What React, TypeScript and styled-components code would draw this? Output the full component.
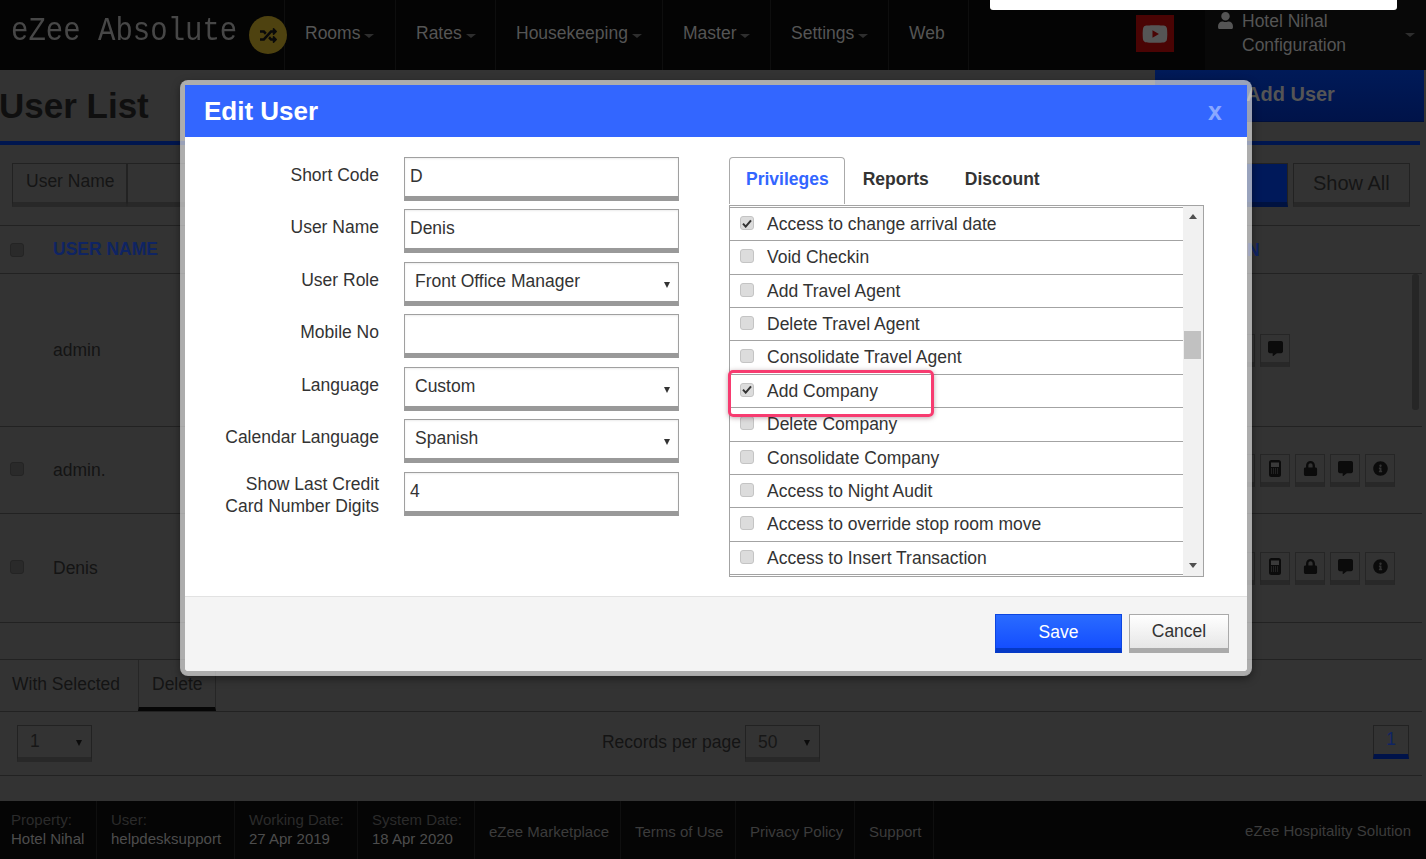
import React from "react";
import styled, { createGlobalStyle } from "styled-components";
import { FaRandom, FaYoutube, FaUser, FaLock, FaCommentAlt, FaInfoCircle } from "react-icons/fa";

const GlobalStyle = createGlobalStyle`
  html, body {
    margin: 0;
    padding: 0;
    height: 100%;
    overflow: hidden;
    background: #333;
  }
  body {
    font-family: "Liberation Sans", Arial, sans-serif;
    font-size: 17.5px;
    color: #111;
  }
  * {
    box-sizing: border-box;
  }
`;

const Page = styled.div`
  position: relative;
  width: 1426px;
  height: 859px;
  display: flex;
  flex-direction: column;
  overflow: hidden;
  background: #333;
`;

/* ---- top bar ---- */
const TopBar = styled.header`
  height: 70px;
  flex: none;
  display: flex;
  align-items: stretch;
  background: #040404;
`;

const LogoBox = styled.div`
  width: 285px;
  flex: none;
  display: flex;
  align-items: center;
  padding: 0 0 6px 11px;
  border-right: 1px solid #0e0e0e;
`;

const LogoText = styled.span`
  font-family: "Liberation Mono", "DejaVu Sans Mono", monospace;
  font-size: 29px;
  color: #474747;
  white-space: nowrap;
  line-height: 34px;
  transform: scaleY(1.12);
  -webkit-box-reflect: below -6px linear-gradient(transparent 70%, rgba(255, 255, 255, 0.12));
`;

const LogoBadge = styled.span`
  width: 38px;
  height: 38px;
  margin: 6px 0 0 12px;
  flex: none;
  border-radius: 50%;
  background: #4e4210;
  color: #0a0a0a;
  display: flex;
  align-items: center;
  justify-content: center;
  font-size: 17px;
`;

const NavItem = styled.div<{ $w: number }>`
  width: ${(p) => p.$w}px;
  flex: none;
  display: flex;
  align-items: center;
  padding: 0 0 4px 20px;
  color: #555;
  border-right: 1px solid #0e0e0e;
  white-space: nowrap;
`;

const Caret = styled.i`
  display: inline-block;
  width: 0;
  height: 0;
  margin: 5px 0 0 4px;
  border-left: 5px solid transparent;
  border-right: 5px solid transparent;
  border-top: 4px solid #2e2e2e;
`;

const NavSpacer = styled.div`
  flex: 1;
`;

const YoutubeBox = styled.div`
  width: 38px;
  height: 37px;
  margin: 15px 31px 0 0;
  flex: none;
  background: #4a0404;
  color: #555;
  display: flex;
  align-items: center;
  justify-content: center;
  font-size: 26px;
`;

const UserBox = styled.div`
  width: 221px;
  flex: none;
  display: flex;
  padding: 9px 0 0 12px;
  background: #080808;
  color: #555;
  line-height: 24px;
`;

const UserIcon = styled.span`
  width: 25px;
  color: #555;
  font-size: 17px;
  padding-top: 3px;
`;

const UserCaret = styled(Caret)`
  position: absolute;
  top: 33px;
  left: 1405px;
  margin: 0;
`;

const WhiteStrip = styled.div`
  position: absolute;
  top: 0;
  left: 990px;
  width: 407px;
  height: 10px;
  background: #fff;
  border-radius: 0 0 3px 3px;
  z-index: 5;
`;

/* ---- user list behind the dialog ---- */
const TitleRow = styled.div`
  height: 75px;
  flex: none;
  display: flex;
  justify-content: space-between;
  border-bottom: 4px solid #00164f;
  margin-right: 6px;
`;

const PageTitle = styled.h1`
  margin: 16px 0 0 -1px;
  font-size: 35px;
  line-height: 40px;
  font-weight: bold;
  color: #0f0f0f;
`;

const AddButton = styled.div`
  width: 269px;
  height: 52px;
  margin-right: -4px;
  background: linear-gradient(#001a58, #001349);
  border-bottom: 1px solid #000f3a;
  color: #555;
  font-size: 20px;
  font-weight: bold;
  padding: 13px 0 0 91px;
`;

const SearchRow = styled.div`
  height: 81px;
  flex: none;
  display: flex;
  padding: 18px 10px 0 12px;
  border-bottom: 1px solid #222;
  margin-right: 6px;
`;

const SearchCell = styled.div<{ $w?: number; $blue?: boolean }>`
  width: ${(p) => (p.$w ? p.$w + "px" : "auto")};
  height: 44px;
  border: 1px solid #222;
  border-bottom: 5px solid ${(p) => (p.$blue ? "#001240" : "#282828")};
  background: ${(p) => (p.$blue ? "#00195a" : "transparent")};
  color: #151515;
  padding: 7px 0 0 13px;
  flex: none;
`;

const SearchGap = styled.div`
  flex: 1;
`;

const ShowAll = styled(SearchCell)`
  margin-left: 5px;
  padding: 8px 0 0 19px;
  font-size: 20px;
`;

const HeadRow = styled.div`
  height: 48px;
  flex: none;
  display: flex;
  align-items: center;
  padding-left: 10px;
  border-bottom: 1px solid #222;
  margin-right: 4px;
  position: relative;
`;

const HeadLabel = styled.span`
  margin-left: 29px;
  color: #0f2463;
  font-weight: bold;
`;

const HeadEnd = styled.span`
  position: absolute;
  left: 1247px;
  top: 14px;
  color: #0f2463;
  font-weight: bold;
`;

const DarkCheck = styled.span<{ $inRow?: boolean }>`
  width: 14px;
  height: 14px;
  flex: none;
  margin-top: ${(p) => (p.$inRow ? 2 : 0)}px;
  border-radius: 3px;
  background: #2a2a2a;
  border: 1px solid #242424;
`;

const TableRow = styled.div<{ $h: number; $pad: number }>`
  height: ${(p) => p.$h}px;
  flex: none;
  display: flex;
  align-items: flex-start;
  padding: ${(p) => p.$pad}px 27px 0 10px;
  border-bottom: 1px solid #222;
  margin-right: 4px;
  color: #141414;
`;

const RowName = styled.span<{ $noBox?: boolean }>`
  margin-left: ${(p) => (p.$noBox ? 43 : 29)}px;
  line-height: 20px;
`;

const RowActions = styled.div<{ $top: number }>`
  margin-left: auto;
  margin-top: ${(p) => p.$top}px;
  width: 170px;
  display: flex;
  gap: 5px;
  justify-content: flex-end;
`;

const RowAction = styled.span<{ $hidden?: boolean }>`
  width: 30px;
  height: 33px;
  display: flex;
  align-items: center;
  justify-content: center;
  visibility: ${(p) => (p.$hidden ? "hidden" : "visible")};
  border: 1px solid #262626;
  border-bottom: 5px solid #282828;
  color: #0b0b0b;
  font-size: 15px;
`;

const PageScrollThumb = styled.div`
  position: absolute;
  left: 1412px;
  top: 274px;
  width: 7px;
  height: 136px;
  background: #262626;
  border-radius: 3px;
`;

const BulkRow = styled.div`
  height: 53px;
  flex: none;
  margin-top: 36px;
  display: flex;
  border-top: 1px solid #222;
  border-bottom: 1px solid #222;
  margin-right: 4px;
  color: #141414;
`;

const BulkLabel = styled.div`
  width: 138px;
  padding: 14px 0 0 12px;
`;

const BulkButton = styled.div`
  width: 78px;
  height: 51px;
  padding: 14px 0 0 13px;
  border-left: 1px solid #262626;
  border-right: 1px solid #262626;
  border-bottom: 4px solid #060606;
`;

const PagerRow = styled.div`
  height: 64px;
  flex: none;
  position: relative;
  display: flex;
  align-items: flex-start;
  padding: 13px 13px 0 17px;
  border-bottom: 1px solid #222;
  margin-right: 4px;
  color: #141414;
`;

const PagerSelect = styled.div<{ $w: number }>`
  width: ${(p) => p.$w}px;
  height: 37px;
  flex: none;
  display: flex;
  align-items: center;
  justify-content: space-between;
  padding: 0 9px 0 12px;
  border: 1px solid #222;
  border-bottom: 5px solid #282828;
  color: #171717;
`;

const Records = styled.div`
  margin-left: auto;
  display: flex;
  align-items: flex-start;
  gap: 4px;
  line-height: 34px;
  margin-right: 553px;
`;

const PageNumber = styled.div`
  width: 36px;
  height: 34px;
  flex: none;
  text-align: center;
  border: 1px solid #222;
  border-bottom: 5px solid #00134a;
  color: #0f2463;
  line-height: 26px;
`;

const PageFooter = styled.footer`
  margin-top: auto;
  height: 58px;
  flex: none;
  display: flex;
  background: #050505;
  font-size: 15px;
  color: #4d4d4d;
`;

const FooterCell = styled.div<{ $w: number }>`
  width: ${(p) => p.$w}px;
  flex: none;
  padding: 9px 0 0 ${(p) => (p.$w === 97 ? 11 : 14)}px;
  border-right: 1px solid #0f0f0f;
  line-height: 19px;
  white-space: nowrap;
`;

const FooterLabel = styled.div`
  color: #2b2b2b;
`;

const FooterLink = styled.div<{ $w: number }>`
  width: ${(p) => p.$w}px;
  flex: none;
  padding-top: 22px;
  padding-left: 14px;
  border-right: 1px solid #0f0f0f;
  color: #3c3c3c;
  white-space: nowrap;
`;

const FooterEnd = styled.div`
  margin-left: auto;
  padding: 21px 15px 0 0;
  color: #3c3c3c;
`;

/* ---- dialog ---- */
const Modal = styled.section`
  position: absolute;
  left: 180px;
  top: 80px;
  width: 1072px;
  height: 596px;
  z-index: 4;
  border: 5px solid rgba(255, 255, 255, 0.6);
  border-radius: 8px;
  background: #fff;
  background-clip: padding-box;
  display: flex;
  flex-direction: column;
  box-shadow: 0 3px 8px rgba(0, 0, 0, 0.4);
`;

const ModalHead = styled.div`
  height: 52px;
  flex: none;
  display: flex;
  align-items: center;
  justify-content: space-between;
  padding: 0 25px 0 19px;
  background: #3366ff;
`;

const ModalTitle = styled.h2`
  margin: 0;
  font-size: 26px;
  font-weight: bold;
  color: #fff;
`;

const CloseX = styled.span`
  font-size: 25px;
  font-weight: bold;
  color: #8aa8ff;
  line-height: 25px;
`;

const ModalBody = styled.div`
  flex: 1;
  display: flex;
  gap: 50px;
  padding: 19px 43px 0 40px;
  border-top: 1px solid #fff;
`;

const FormColumn = styled.div`
  width: 454px;
  flex: none;
  display: grid;
  grid-auto-rows: 44px;
  row-gap: 8.45px;
  align-content: start;
`;

const FormRow = styled.div`
  display: grid;
  grid-template-columns: 154px 275px;
  column-gap: 25px;
`;

const FieldLabel = styled.label<{ $multi?: boolean }>`
  text-align: right;
  color: #333;
  line-height: 22px;
  padding-top: ${(p) => (p.$multi ? 1 : 7)}px;
  white-space: nowrap;
`;

const FieldBox = styled.div`
  height: 44px;
  border: 1px solid #a0a0a0;
  border-bottom: 5px solid #999;
  background: #fff;
  box-shadow: inset 0 1px 2px rgba(0, 0, 0, 0.08);
  color: #333;
  padding: 6px 0 0 5px;
  line-height: 24px;
`;

const SelectBox = styled(FieldBox)`
  display: flex;
  align-items: flex-start;
  justify-content: space-between;
  padding: 6px 8px 0 10px;
`;

const SelectCaret = styled.i`
  width: 0;
  height: 0;
  margin-top: 13px;
  border-left: 3.5px solid transparent;
  border-right: 3.5px solid transparent;
  border-top: 6px solid #333;
`;

const PagerCaret = styled(SelectCaret)`
  margin-top: 2px;
  border-top-color: #0b0b0b;
`;

const PrivColumn = styled.div`
  width: 475px;
  flex: none;
  display: flex;
  flex-direction: column;
`;

const TabBar = styled.div`
  height: 48px;
  flex: none;
  display: flex;
  align-items: flex-start;
`;

const Tab = styled.div<{ $active?: boolean }>`
  height: 47px;
  padding: 11px ${(p) => (p.$active ? "15px" : "17px")} 0 ${(p) => (p.$active ? "16px" : "17px")};
  font-weight: bold;
  color: ${(p) => (p.$active ? "#3366ff" : "#333")};
  line-height: 20px;
  border: 1px solid ${(p) => (p.$active ? "#aaa" : "transparent")};
  border-bottom: none;
  border-radius: 4px 4px 0 0;
`;

const ListBox = styled.div`
  height: 372px;
  flex: none;
  display: flex;
  border: 1px solid #a3a3a3;
  overflow: hidden;
  position: relative;
`;

const ListRows = styled.div`
  flex: 1;
  padding-top: 1px;
`;

const ListRow = styled.div`
  height: 33.36px;
  display: flex;
  align-items: flex-start;
  padding: 0 0 0 10px;
  border-top: 1px solid #a3a3a3;
  color: #333;
  line-height: 32px;
`;

const CheckBox = styled.span`
  width: 14px;
  height: 14px;
  margin-top: 8px;
  flex: none;
  border-radius: 3px;
  background: #dcdcdc;
  border: 1px solid #c4c4c4;
  display: flex;
  align-items: center;
  justify-content: center;
`;

const RowText = styled.span`
  margin-left: 13px;
`;

const ScrollTrack = styled.div`
  width: 20px;
  flex: none;
  background: #f1f1f1;
  display: flex;
  flex-direction: column;
  align-items: center;
  justify-content: space-between;
  padding: 8px 0 8px;
  position: relative;
`;

const ScrollArrow = styled.i<{ $down?: boolean }>`
  width: 0;
  height: 0;
  border-left: 4px solid transparent;
  border-right: 4px solid transparent;
  ${(p) => (p.$down ? "border-top" : "border-bottom")}: 5px solid #505050;
`;

const ScrollThumb = styled.div`
  position: absolute;
  left: 1px;
  top: 125px;
  width: 17px;
  height: 28px;
  background: #c1c1c1;
`;

const Highlight = styled.div`
  position: absolute;
  left: 543px;
  top: 285px;
  width: 206px;
  height: 47px;
  border: 3px solid #f73b70;
  border-radius: 5px;
  box-shadow: 0 1px 5px rgba(60, 0, 20, 0.35);
  z-index: 3;
  pointer-events: none;
`;

const ModalFoot = styled.div`
  height: 75px;
  flex: none;
  display: flex;
  justify-content: flex-end;
  gap: 7px;
  padding: 17px 18px 0 0;
  background: #f4f4f4;
  border-top: 1px solid #e2e2e2;
  border-radius: 0 0 3px 3px;
`;

const SaveButton = styled.div`
  width: 127px;
  height: 39px;
  text-align: center;
  line-height: 34px;
  color: #fff;
  background: linear-gradient(#2a6bff, #144eff);
  border: 1px solid #0c45e0;
  border-bottom: 5px solid #0539c6;
`;

const CancelButton = styled.div`
  width: 100px;
  height: 39px;
  text-align: center;
  line-height: 32px;
  color: #333;
  background: linear-gradient(#ffffff, #e6e6e6);
  border: 1px solid #aaa;
  border-bottom: 5px solid #aaa;
`;

const Check = () => (
  <svg width="10" height="9" viewBox="0 0 10 9">
    <path d="M1 4.6 L3.7 7.6 L9 1.4" fill="none" stroke="#333" strokeWidth="2" />
  </svg>
);

const PhoneIcon = () => (
  <svg width="12" height="17" viewBox="0 0 12 17">
    <rect x="0" y="0" width="12" height="17" rx="2.5" fill="#0b0b0b" />
    <rect x="2" y="2.5" width="8" height="4.5" fill="#3a3a3a" />
    <path d="M2 9h8M2 11h8M2 13h8" stroke="#3a3a3a" strokeWidth="1" strokeDasharray="1 1" />
  </svg>
);

const fields = [
  { label: "Short Code", value: "D" },
  { label: "User Name", value: "Denis" },
  { label: "User Role", value: "Front Office Manager", select: true },
  { label: "Mobile No", value: "" },
  { label: "Language", value: "Custom", select: true },
  { label: "Calendar Language", value: "Spanish", select: true },
];

const privileges = [
  { name: "Access to change arrival date", checked: true },
  { name: "Void Checkin" },
  { name: "Add Travel Agent" },
  { name: "Delete Travel Agent" },
  { name: "Consolidate Travel Agent" },
  { name: "Add Company", checked: true },
  { name: "Delete Company" },
  { name: "Consolidate Company" },
  { name: "Access to Night Audit" },
  { name: "Access to override stop room move" },
  { name: "Access to Insert Transaction" },
];

const ActionSet = ({ top }: { top: number }) => (
  <RowActions $top={top}>
    <RowAction />
    <RowAction>
      <PhoneIcon />
    </RowAction>
    <RowAction>
      <FaLock />
    </RowAction>
    <RowAction>
      <FaCommentAlt />
    </RowAction>
    <RowAction>
      <FaInfoCircle />
    </RowAction>
  </RowActions>
);

const App = () => {
  return (
    <Page>
      <GlobalStyle />
      <WhiteStrip />
      <TopBar>
        <LogoBox>
          <LogoText>eZee Absolute</LogoText>
          <LogoBadge>
            <FaRandom />
          </LogoBadge>
        </LogoBox>
        <NavItem $w={111}>
          Rooms<Caret />
        </NavItem>
        <NavItem $w={100}>
          Rates<Caret />
        </NavItem>
        <NavItem $w={167}>
          Housekeeping<Caret />
        </NavItem>
        <NavItem $w={108}>
          Master<Caret />
        </NavItem>
        <NavItem $w={118}>
          Settings<Caret />
        </NavItem>
        <NavItem $w={80}>Web</NavItem>
        <NavSpacer />
        <YoutubeBox>
          <FaYoutube />
        </YoutubeBox>
        <UserBox>
          <UserIcon>
            <FaUser />
          </UserIcon>
          <div>
            Hotel Nihal
            <br />
            Configuration
          </div>
        </UserBox>
        <UserCaret />
      </TopBar>

      <TitleRow>
        <PageTitle>User List</PageTitle>
        <AddButton>Add User</AddButton>
      </TitleRow>
      <SearchRow>
        <SearchCell $w={115}>User Name</SearchCell>
        <SearchCell $w={100} />
        <SearchGap />
        <SearchCell $w={120} $blue />
        <ShowAll $w={117}>Show All</ShowAll>
      </SearchRow>
      <HeadRow>
        <DarkCheck />
        <HeadLabel>USER NAME</HeadLabel>
        <HeadEnd>N</HeadEnd>
      </HeadRow>
      <TableRow $h={153} $pad={66}>
        <RowName $noBox>admin</RowName>
        <RowActions $top={-6}>
          <RowAction />
          <RowAction>
            <FaCommentAlt />
          </RowAction>
          <RowAction $hidden />
          <RowAction $hidden />
          <RowAction $hidden />
        </RowActions>
      </TableRow>
      <TableRow $h={87} $pad={33}>
        <DarkCheck $inRow />
        <RowName>admin.</RowName>
        <ActionSet top={-6} />
      </TableRow>
      <TableRow $h={109} $pad={44}>
        <DarkCheck $inRow />
        <RowName>Denis</RowName>
        <ActionSet top={-6} />
      </TableRow>
      <PageScrollThumb />
      <BulkRow>
        <BulkLabel>With Selected</BulkLabel>
        <BulkButton>Delete</BulkButton>
      </BulkRow>
      <PagerRow>
        <PagerSelect $w={75}>
          1<PagerCaret />
        </PagerSelect>
        <Records>
          Records per page
          <PagerSelect $w={75}>
            50
            <PagerCaret />
          </PagerSelect>
        </Records>
        <PageNumber>1</PageNumber>
      </PagerRow>
      <PageFooter>
        <FooterCell $w={97}>
          <FooterLabel>Property:</FooterLabel>
          Hotel Nihal
        </FooterCell>
        <FooterCell $w={138}>
          <FooterLabel>User:</FooterLabel>
          helpdesksupport
        </FooterCell>
        <FooterCell $w={123}>
          <FooterLabel>Working Date:</FooterLabel>
          27 Apr 2019
        </FooterCell>
        <FooterCell $w={117}>
          <FooterLabel>System Date:</FooterLabel>
          18 Apr 2020
        </FooterCell>
        <FooterLink $w={146}>eZee Marketplace</FooterLink>
        <FooterLink $w={115}>Terms of Use</FooterLink>
        <FooterLink $w={119}>Privacy Policy</FooterLink>
        <FooterLink $w={79}>Support</FooterLink>
        <FooterEnd>eZee Hospitality Solution</FooterEnd>
      </PageFooter>

      <Modal>
        <ModalHead>
          <ModalTitle>Edit User</ModalTitle>
          <CloseX>x</CloseX>
        </ModalHead>
        <ModalBody>
          <FormColumn>
            {fields.map((f) => (
              <FormRow key={f.label}>
                <FieldLabel>{f.label}</FieldLabel>
                {f.select ? (
                  <SelectBox>
                    {f.value}
                    <SelectCaret />
                  </SelectBox>
                ) : (
                  <FieldBox>{f.value}</FieldBox>
                )}
              </FormRow>
            ))}
            <FormRow>
              <FieldLabel $multi>
                Show Last Credit
                <br />
                Card Number Digits
              </FieldLabel>
              <FieldBox>4</FieldBox>
            </FormRow>
          </FormColumn>
          <PrivColumn>
            <TabBar>
              <Tab $active>Privileges</Tab>
              <Tab>Reports</Tab>
              <Tab>Discount</Tab>
            </TabBar>
            <ListBox>
              <ListRows>
                {privileges.map((p) => (
                  <ListRow key={p.name}>
                    <CheckBox>{p.checked && <Check />}</CheckBox>
                    <RowText>{p.name}</RowText>
                  </ListRow>
                ))}
                <ListRow />
              </ListRows>
              <ScrollTrack>
                <ScrollArrow />
                <ScrollThumb />
                <ScrollArrow $down />
              </ScrollTrack>
            </ListBox>
          </PrivColumn>
          <Highlight />
        </ModalBody>
        <ModalFoot>
          <SaveButton>Save</SaveButton>
          <CancelButton>Cancel</CancelButton>
        </ModalFoot>
      </Modal>
    </Page>
  );
};

export default App;
